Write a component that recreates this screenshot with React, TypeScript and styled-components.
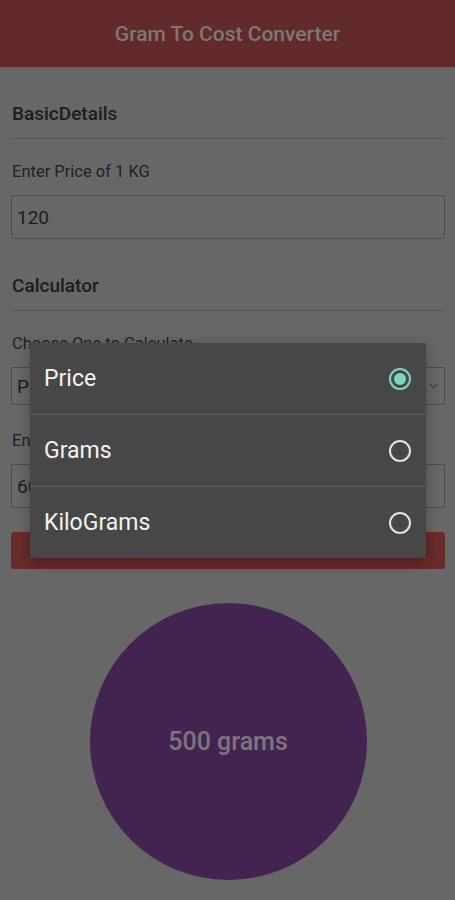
import React from "react"
import styled, { createGlobalStyle } from "styled-components"

const GlobalStyle = createGlobalStyle`
  html, body {
    margin: 0;
    padding: 0;
    background: #676767;
  }
  body {
    font-family: Roboto, "Noto Sans", sans-serif;
  }
`

const options = ["Price", "Grams", "KiloGrams"]

const App = () => {
  const selected = "Price"
  return (
    <Screen>
      <GlobalStyle />
      <Header>Gram To Cost Converter</Header>
      <Content>
        <SectionTitle>BasicDetails</SectionTitle>
        <Divider />
        <Label>Enter Price of 1 KG</Label>
        <Field>120</Field>
        <SectionTitle>Calculator</SectionTitle>
        <Divider />
        <Label>Choose One to Calculate</Label>
        <Select>
          <span>Price</span>
          <Chevron viewBox="0 0 10 6">
            <path d="M1 1l4 4 4-4" fill="none" stroke="#3a3a3a" strokeWidth="1.2" />
          </Chevron>
        </Select>
        <Label spaced>Enter Price</Label>
        <Field>60</Field>
        <Button>Calculate</Button>
        <ResultWrap>
          <Result>500 grams</Result>
        </ResultWrap>
      </Content>

      <Dialog>
        {options.map((o, i) => (
          <Option key={o} last={i === options.length - 1}>
            <span>{o}</span>
            <Radio checked={o === selected} />
          </Option>
        ))}
      </Dialog>
    </Screen>
  )
}

export default App

const Screen = styled.div`
  position: relative;
  width: 455px;
  height: 900px;
  overflow: hidden;
  background: #676767;
`

const Header = styled.div`
  height: 67px;
  background: #622a2a;
  color: #7f7777;
  font-size: 21px;
  font-weight: 500;
  display: flex;
  align-items: center;
  justify-content: center;
`

const Content = styled.div`
  display: flex;
  flex-direction: column;
  padding: 0 10px 0 11px;
`

const SectionTitle = styled.div`
  margin-top: 35px;
  font-size: 19px;
  font-weight: 500;
  color: #1c1c1c;
  padding-left: 1px;
`

const Divider = styled.div`
  height: 1px;
  background: #545454;
  margin: 13px 0 0 1px;
`

const Label = styled.div<{ spaced?: boolean }>`
  margin-top: ${(p) => (p.spaced ? "26px" : "23px")};
  font-size: 16.5px;
  color: #222;
  padding-left: 1px;
`

const Field = styled.div`
  margin-top: 14px;
  height: 42px;
  border: 1px solid #4c4c4c;
  border-radius: 2px;
  display: flex;
  align-items: center;
  padding-left: 5px;
  font-size: 19px;
  color: #1c1c1c;
`

const Select = styled(Field)`
  height: 36px;
  justify-content: space-between;
  padding-right: 6px;
`

const Chevron = styled.svg`
  width: 9px;
  height: 6px;
`

const Button = styled.div`
  margin-top: 24px;
  height: 37px;
  border-radius: 3px;
  background: #6a2a2a;
  display: flex;
  align-items: center;
  justify-content: center;
  color: #6a2a2a;
`

const ResultWrap = styled.div`
  display: flex;
  justify-content: center;
  margin-top: 34px;
`

const Result = styled.div`
  width: 277px;
  height: 277px;
  border-radius: 50%;
  background: #432451;
  color: #7d747e;
  font-size: 25px;
  font-weight: 500;
  display: flex;
  align-items: center;
  justify-content: center;
`

const Dialog = styled.div`
  position: absolute;
  left: 30px;
  top: 343px;
  width: 396px;
  background: #474747;
  box-shadow: 0 4px 12px rgba(0, 0, 0, 0.3);
  display: flex;
  flex-direction: column;
`

const Option = styled.div<{ last?: boolean }>`
  height: 71px;
  display: flex;
  align-items: center;
  justify-content: space-between;
  padding: 0 15px 0 14px;
  color: #f2f2f2;
  font-size: 23px;
  border-bottom: ${(p) => (p.last ? "none" : "1px solid #5c5c5c")};
`

const Radio = styled.div<{ checked?: boolean }>`
  width: 18px;
  height: 18px;
  border-radius: 50%;
  border: 2px solid ${(p) => (p.checked ? "#7dd6c2" : "#e4e4e4")};
  position: relative;
  &::after {
    content: "";
    display: ${(p) => (p.checked ? "block" : "none")};
    position: absolute;
    left: 3px;
    top: 3px;
    width: 12px;
    height: 12px;
    border-radius: 50%;
    background: #7dd6c2;
  }
`
